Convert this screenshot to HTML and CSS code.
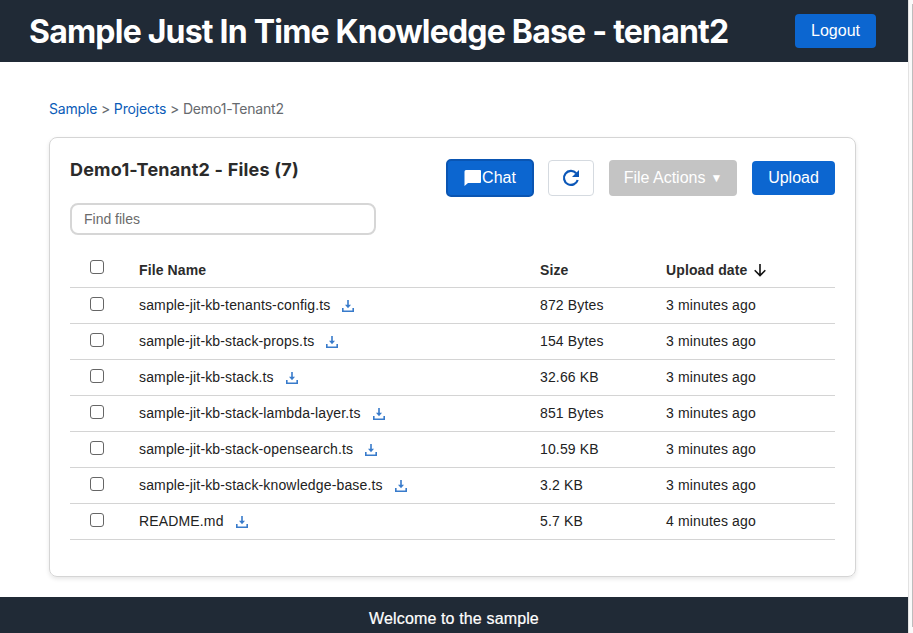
FILE: index.html
```html
<!DOCTYPE html>
<html lang="en">
<head>
<meta charset="utf-8">
<title>Sample Just In Time Knowledge Base</title>
<link rel="stylesheet" href="styles.css">
</head>
<body>
<svg class="sprite" aria-hidden="true">
  <symbol id="download" viewBox="0 0 12 12"><path d="M.8 8v3.200h10.400V8M6 0v6" fill="none" stroke="currentColor" stroke-width="1.600"/><path d="M3 4.800h6L6 8.300z" fill="currentColor"/></symbol>
</svg>
<div class="app">
  <header class="topbar">
    <h1 class="title"><span>Sample Just In Time Knowledge Base - tenant2</span></h1>
    <button class="btn logout">Logout</button>
  </header>
  <main class="main">
    <nav class="crumbs"><a>Sample</a> &gt; <a>Projects</a> &gt; <span>Demo1-Tenant2</span></nav>
    <section class="card">
      <div class="toolbar">
        <h2 class="heading"><span>Demo1-Tenant2 - Files (7)</span></h2>
        <div class="actions">
          <button class="btn chat"><svg width="18" height="18" viewBox="0 0 18 18"><path d="M2 1h14a1 1 0 0 1 1 1v11a1 1 0 0 1-1 1H4l-3.500 3V2.500A1.500 1.500 0 0 1 2 1z" fill="currentColor"/></svg>Chat</button>
          <button class="btn refresh" aria-label="Refresh"><svg width="18" height="18" viewBox="0 0 18 18"><path d="M14.200 4.200A7 7 0 1 0 15.700 11" fill="none" stroke="currentColor" stroke-width="2.200"/><path d="M17 1v7h-7z" fill="currentColor"/></svg></button>
          <button class="btn file-actions" disabled>File Actions <span class="caret">▼</span></button>
          <button class="btn upload">Upload</button>
        </div>
      </div>
      <input class="search" placeholder="Find files">
      <table class="files">
        <colgroup><col class="c-check"><col class="c-name"><col class="c-size"><col></colgroup>
        <thead><tr><th><input type="checkbox"></th><th>File Name</th><th>Size</th><th>Upload date <svg class="arrow" width="12" height="13" viewBox="0 0 12 13"><path d="M6 0v11.500M.700 6.300L6 11.600l5.300-5.300" fill="none" stroke="currentColor" stroke-width="1.600"/></svg></th></tr></thead>
        <tbody>
          <tr><td><input type="checkbox"></td><td>sample-jit-kb-tenants-config.ts<svg class="dl"><use href="#download"/></svg></td><td>872 Bytes</td><td>3 minutes ago</td></tr>
          <tr><td><input type="checkbox"></td><td>sample-jit-kb-stack-props.ts<svg class="dl"><use href="#download"/></svg></td><td>154 Bytes</td><td>3 minutes ago</td></tr>
          <tr><td><input type="checkbox"></td><td>sample-jit-kb-stack.ts<svg class="dl"><use href="#download"/></svg></td><td>32.66 KB</td><td>3 minutes ago</td></tr>
          <tr><td><input type="checkbox"></td><td>sample-jit-kb-stack-lambda-layer.ts<svg class="dl"><use href="#download"/></svg></td><td>851 Bytes</td><td>3 minutes ago</td></tr>
          <tr><td><input type="checkbox"></td><td>sample-jit-kb-stack-opensearch.ts<svg class="dl"><use href="#download"/></svg></td><td>10.59 KB</td><td>3 minutes ago</td></tr>
          <tr><td><input type="checkbox"></td><td>sample-jit-kb-stack-knowledge-base.ts<svg class="dl"><use href="#download"/></svg></td><td>3.2 KB</td><td>3 minutes ago</td></tr>
          <tr><td><input type="checkbox"></td><td>README.md<svg class="dl"><use href="#download"/></svg></td><td>5.7 KB</td><td>4 minutes ago</td></tr>
        </tbody>
      </table>
    </section>
  </main>
  <footer class="footer"><span>Welcome to the sample</span></footer>
</div>
<div class="scrollbar"><div class="thumb"></div></div>
</body>
</html>
```

FILE: styles.css
```css
* { box-sizing: border-box; }
body { margin: 0; height: 633px; display: flex; overflow: hidden; background: #fff; color: #222; font: 14px "Liberation Sans", Arial, sans-serif; }
.sprite { position: absolute; width: 0; height: 0; }
.app { width: 908px; display: flex; flex-direction: column; }
.topbar { height: 62px; background: #202a36; display: flex; justify-content: space-between; align-items: center; padding: 0 32px 0 29px; }
.title { margin: 0; padding-top: 2px; color: #fff; font: 700 32px/40px Inter, sans-serif; letter-spacing: -0.79px; white-space: nowrap; }
.btn { border: 0; border-radius: 4px; background: #0c66d0; color: #fff; font: 16px/20px "Liberation Sans", Arial, sans-serif; display: flex; align-items: center; justify-content: center; padding: 0; height: 34px; }
.logout { width: 81px; }
.main { flex: 1; padding: 38px 52px 20px 49px; display: flex; flex-direction: column; }
.crumbs { height: 18px; font: 14px/18px Inter, sans-serif; letter-spacing: -0.17px; color: #666a6e; margin-bottom: 19px; }
.crumbs a { color: #0b5cb8; }
.card { flex: 1; border: 1px solid #d5d5d5; border-radius: 8px; box-shadow: 0 2px 4px rgba(0,0,0,.1); padding: 20px; }
.toolbar { display: flex; justify-content: space-between; height: 45px; }
.heading { margin: 0; font: 700 18px/23px Inter, sans-serif; letter-spacing: .2px; color: #2b2b2b; }
.actions { display: flex; align-items: center; height: 40px; }
.chat { width: 88px; height: 38px; border: 2px solid #0a55b2; border-radius: 5px; margin-right: 14px; }
.refresh { width: 46px; height: 36px; background: #fff; border: 1px solid #d5dae0; color: #0b57b8; margin-right: 15px; }
.file-actions { width: 128px; height: 36px; background: #c4c4c4; margin-right: 15px; }
.caret { font-size: 12px; margin-left: 5px; }
.upload { width: 83px; }
.search { display: block; width: 306px; height: 32px; border: 2px solid #d6d6d6; border-radius: 8px; padding: 0 12px; font: 14px "Liberation Sans", Arial, sans-serif; background: #fff; }
.search::placeholder { color: #6b6b6b; }
.files { width: 765px; margin-top: 16px; border-collapse: collapse; table-layout: fixed; }
.c-check { width: 69px; }
.c-name { width: 401px; }
.c-size { width: 126px; }
.files th, .files td { height: 36px; padding: 0; border-bottom: 1px solid #d4d4d4; text-align: left; white-space: nowrap; }
.files th { padding-top: 2px; letter-spacing: .12px; color: #2b2b2b; }
.files td { letter-spacing: .15px; }
.files input { display: block; width: 14px; height: 14px; margin: 0 0 3px 20px; appearance: none; border: 1px solid #666; border-radius: 3px; background: #fff; }
.files th input { margin-bottom: 5px; }
.dl { width: 12px; height: 12px; margin-left: 12px; vertical-align: -2px; color: #387bcb; }
.arrow { vertical-align: -2px; margin-left: 3px; color: #111; }
.footer { height: 36px; background: #202a36; color: #fff; display: flex; justify-content: center; align-items: center; padding-top: 8px; font: 16px "Liberation Sans", Arial, sans-serif; letter-spacing: .14px; -webkit-text-stroke: .2px #fff; }
.scrollbar { width: 5px; border-left: 1px solid #e2e2e2; background: #fafafa; padding: 4px 0 6px 3px; }
.thumb { height: 100%; background: #bdbdbd; }
```
